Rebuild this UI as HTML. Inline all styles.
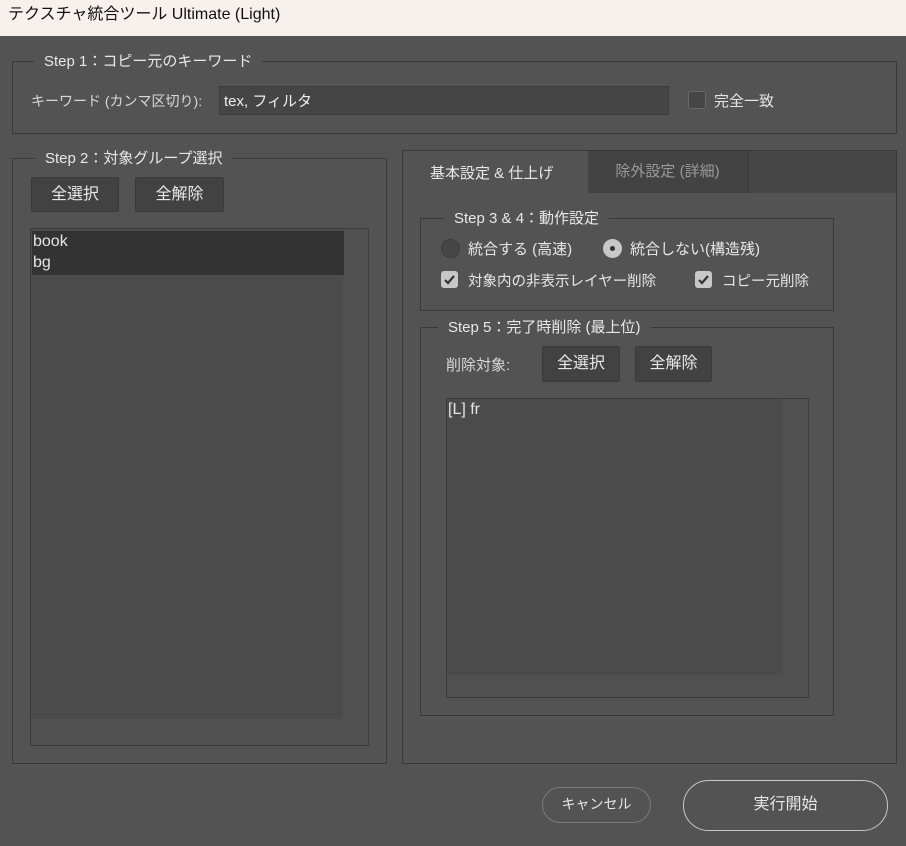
<!DOCTYPE html>
<html><head><meta charset="utf-8"><style>
*{box-sizing:border-box;margin:0;padding:0}
body{width:906px;height:846px;background:#535353;font-family:"Liberation Sans","Noto Sans CJK JP",sans-serif;color:#e6e6e6;font-size:15px;position:relative;overflow:hidden}
.a{position:absolute}
.title{left:0;top:0;width:906px;height:36px;background:#f7f1ee;color:#111;font-size:16px;line-height:30px;padding-left:8px}
.grp{position:absolute;border:1px solid #3a3a3a}
.lg{position:absolute;background:#535353;padding:0 10px;line-height:20px;top:-10px;color:#e8e8e8}
.btn{position:absolute;background:#424242;border:1px solid #3a3a3a;border-radius:2px;text-align:center;color:#e8e8e8;font-size:16px}
.cb{position:absolute;width:17px;height:17px;border-radius:3px;background:#c8c8c8}
.cb svg{position:absolute;left:2px;top:3px}
</style></head><body>
<div class="a title">テクスチャ統合ツール Ultimate (Light)</div>

<div class="grp" style="left:12px;top:61px;width:885px;height:73px"><div class="lg" style="left:21px">Step 1：コピー元のキーワード</div></div>
<div class="a" style="left:31px;top:91px;color:#d8d8d8;font-size:14px">キーワード (カンマ区切り):</div>
<div class="a" style="left:219px;top:86px;width:450px;height:29px;background:#454545;border:1px solid #3c3c3c;padding:3px 4px;color:#eee">tex, フィルタ</div>
<div class="a" style="left:688px;top:91px;width:18px;height:18px;border:1px solid #6a6a6a;border-radius:3px;background:#464646"></div>
<div class="a" style="left:714px;top:90px">完全一致</div>

<div class="grp" style="left:12px;top:158px;width:375px;height:606px"><div class="lg" style="left:22px">Step 2：対象グループ選択</div></div>
<div class="btn" style="left:31px;top:177px;width:88px;height:35px;line-height:33px">全選択</div>
<div class="btn" style="left:135px;top:177px;width:89px;height:35px;line-height:33px">全解除</div>
<div class="a" style="left:30px;top:228px;width:339px;height:518px;background:#505050;border:1px solid #3c3c3c"></div>
<div class="a" style="left:31px;top:229px;width:312px;height:490px;background:#4b4b4b"></div>
<div class="a" style="left:32px;top:231px;width:312px;height:44px;background:#333;line-height:21px;padding-left:1px;font-size:16px">book<br>bg</div>

<div class="a" style="left:402px;top:150px;width:495px;height:614px;border:1px solid #3a3a3a"></div>
<div class="a" style="left:588px;top:151px;width:161px;height:42px;background:#434343;border-right:2px solid #3d3d3d;color:#9a9a9a;text-align:center;line-height:42px">除外設定 (詳細)</div>
<div class="a" style="left:749px;top:151px;width:147px;height:42px;background:#474747"></div>
<div class="a" style="left:430px;top:162px;color:#e8e8e8">基本設定 &amp; 仕上げ</div>

<div class="grp" style="left:420px;top:218px;width:414px;height:93px"><div class="lg" style="left:23px">Step 3 &amp; 4：動作設定</div></div>
<div class="a" style="left:441px;top:239px;width:19px;height:19px;border-radius:50%;background:#464646;border:1px solid #3c3c3c"></div>
<div class="a" style="left:468px;top:238px">統合する (高速)</div>
<div class="a" style="left:603px;top:239px;width:19px;height:19px;border-radius:50%;background:#c8c8c8"><div class="a" style="left:7px;top:7px;width:5px;height:5px;border-radius:50%;background:#333"></div></div>
<div class="a" style="left:630px;top:238px">統合しない(構造残)</div>
<div class="cb" style="left:441px;top:271px"><svg width="13" height="11" viewBox="0 0 13 11"><path d="M2 6 L5 9 L11 2" stroke="#333" stroke-width="2.2" fill="none"/></svg></div>
<div class="a" style="left:468px;top:270px;font-size:14.5px">対象内の非表示レイヤー削除</div>
<div class="cb" style="left:695px;top:271px"><svg width="13" height="11" viewBox="0 0 13 11"><path d="M2 6 L5 9 L11 2" stroke="#333" stroke-width="2.2" fill="none"/></svg></div>
<div class="a" style="left:722px;top:270px;font-size:14.5px">コピー元削除</div>

<div class="grp" style="left:420px;top:327px;width:414px;height:389px"><div class="lg" style="left:17px">Step 5：完了時削除 (最上位)</div></div>
<div class="a" style="left:446px;top:354px;color:#d8d8d8">削除対象:</div>
<div class="btn" style="left:542px;top:346px;width:78px;height:36px;line-height:34px">全選択</div>
<div class="btn" style="left:635px;top:346px;width:77px;height:36px;line-height:34px">全解除</div>
<div class="a" style="left:446px;top:398px;width:363px;height:300px;background:#505050;border:1px solid #3c3c3c"></div>
<div class="a" style="left:447px;top:399px;width:336px;height:276px;background:#4b4b4b;padding:2px 1px;font-size:16px">[L] fr</div>

<div class="a" style="left:542px;top:787px;width:109px;height:36px;border:1.5px solid #7a7a7a;border-radius:18px;text-align:center;line-height:33px;font-size:14px">キャンセル</div>
<div class="a" style="left:683px;top:780px;width:205px;height:51px;border:1.5px solid #c8c8c8;border-radius:26px;text-align:center;line-height:48px;font-size:16px">実行開始</div>
</body></html>
